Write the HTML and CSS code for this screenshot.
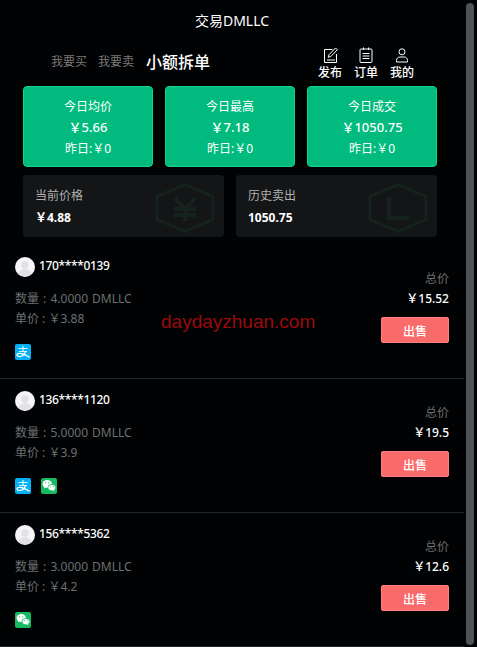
FILE: index.html
```html
<!DOCTYPE html>
<html lang="zh">
<head>
<meta charset="UTF-8">
<meta name="viewport" content="width=device-width, initial-scale=1.0">
<title>交易DMLLC</title>
<link rel="stylesheet" href="styles.css">
</head>
<body>
<svg class="sprites" width="0" height="0">
  <symbol id="alipay" viewBox="0 0 16 16">
    <rect width="16" height="16" rx="2" fill="#06b0f5"/>
    <path d="M8 2v5M3.500 4.500h9M4 7.500h8" stroke="#d5f1fe" stroke-width="1.200" fill="none"/>
    <path d="M10.500 7.500C9.500 10.500 7 12.500 4.500 12.500 3 12.500 2 11.900 2 10.900S3.200 9.300 4.800 9.300c2.500 0 6 1.500 9.700 3.900" stroke="#fff" stroke-width="1.200" fill="none"/>
  </symbol>
  <symbol id="wechat" viewBox="0 0 16 16">
    <rect width="16" height="16" rx="2" fill="#15bb62"/>
    <ellipse cx="6.200" cy="6" rx="4.700" ry="3.900" fill="#fff"/>
    <path d="M3.400 8.300 3 10.300l2.300-1.300z" fill="#fff"/>
    <ellipse cx="10.800" cy="9.600" rx="3.900" ry="3.200" stroke="#15bb62" stroke-width=".8" fill="#fff"/>
    <path d="M12.700 11.800l.5 1.500-1.900-1z" fill="#fff"/>
    <circle cx="4.600" cy="4.800" r=".6" fill="#15bb62"/>
    <circle cx="7.800" cy="4.800" r=".6" fill="#15bb62"/>
    <circle cx="9.500" cy="8.800" r=".5" fill="#15bb62"/>
    <circle cx="12.100" cy="8.800" r=".5" fill="#15bb62"/>
  </symbol>
  <symbol id="avatar" viewBox="0 0 20 20">
    <circle cx="10" cy="10" r="10" fill="#f6f6f8"/>
    <circle cx="10" cy="8" r="3.700" fill="#e2e2e6"/>
    <path d="M3.500 16.500c1-3.200 3.500-4.500 6.500-4.500s5.500 1.300 6.500 4.500A9.500 9.500 0 0 1 10 19.500a9.500 9.500 0 0 1-6.500-3z" fill="#e2e2e6"/>
  </symbol>
</svg>

<div class="page">
  <div class="title">交易DMLLC</div>

  <div class="nav">
    <div class="tabs">
      <span class="tab">我要买</span>
      <span class="tab">我要卖</span>
      <span class="tab active">小额拆单</span>
    </div>
    <div class="links">
      <div class="link">
        <svg width="16" height="16" viewBox="0 0 16 16" fill="none" stroke="#fff" stroke-width="1">
          <path d="M10.500 2.500H2.500v13h12V7"/>
          <path d="M13.500 1l1.800 1.800-6.500 6.700-2.600.8.800-2.600zM5 13h8"/>
        </svg>
        <span>发布</span>
      </div>
      <div class="link">
        <svg width="16" height="16" viewBox="0 0 16 16" fill="none" stroke="#fff" stroke-width="1">
          <rect x="2" y="2" width="12" height="13.500" rx="1"/>
          <path d="M5.500.5v2.500M10.500.5v2.500M4.500 6.500h7M4.500 9h7M4.500 11.500h7"/>
        </svg>
        <span>订单</span>
      </div>
      <div class="link">
        <svg width="16" height="16" viewBox="0 0 16 16" fill="none" stroke="#fff" stroke-width="1">
          <circle cx="8" cy="4.800" r="3"/>
          <path d="M2.500 15v-1.500c0-2 1.500-3.500 3.500-3.500h4c2 0 3.500 1.500 3.500 3.500V15z"/>
        </svg>
        <span>我的</span>
      </div>
    </div>
  </div>

  <div class="today">
    <div class="today-card">
      <div class="today-name">今日均价</div>
      <div class="today-value">￥5.66</div>
      <div class="today-prev">昨日:￥0</div>
    </div>
    <div class="today-card">
      <div class="today-name">今日最高</div>
      <div class="today-value">￥7.18</div>
      <div class="today-prev">昨日:￥0</div>
    </div>
    <div class="today-card">
      <div class="today-name">今日成交</div>
      <div class="today-value">￥1050.75</div>
      <div class="today-prev">昨日:￥0</div>
    </div>
  </div>

  <div class="summary">
    <div class="summary-card">
      <div class="summary-name">当前价格</div>
      <div class="summary-value">￥4.88</div>
      <svg class="hex" width="60" height="50" viewBox="0 0 60 50" fill="none" stroke="#15221e" stroke-width="3">
        <path d="M30 1.500 58 13.500v23L30 48.500 2 36.500v-23z"/>
        <path d="M20 15l10 11 10-11M30 26v12M19 26h22M19 32h22" stroke-width="4"/>
      </svg>
    </div>
    <div class="summary-card">
      <div class="summary-name">历史卖出</div>
      <div class="summary-value">1050.75</div>
      <svg class="hex" width="60" height="50" viewBox="0 0 60 50" fill="none" stroke="#15221e" stroke-width="3">
        <path d="M30 1.500 58 13.500v23L30 48.500 2 36.500v-23z"/>
        <path d="M21 14v21h20" stroke-width="4"/>
      </svg>
    </div>
  </div>

  <div class="order">
    <div class="order-info">
      <div class="user"><svg class="avatar"><use href="#avatar"/></svg><span>170****0139</span></div>
      <div class="line qty">数量 : 4.0000 DMLLC</div>
      <div class="line">单价 : ￥3.88</div>
      <div class="pay"><svg class="pay-icon"><use href="#alipay"/></svg></div>
    </div>
    <div class="order-side">
      <div class="total-name">总价</div>
      <div class="total">￥15.52</div>
      <button class="sell">出售</button>
    </div>
  </div>

  <div class="order">
    <div class="order-info">
      <div class="user"><svg class="avatar"><use href="#avatar"/></svg><span>136****1120</span></div>
      <div class="line qty">数量 : 5.0000 DMLLC</div>
      <div class="line">单价 : ￥3.9</div>
      <div class="pay"><svg class="pay-icon"><use href="#alipay"/></svg><svg class="pay-icon"><use href="#wechat"/></svg></div>
    </div>
    <div class="order-side">
      <div class="total-name">总价</div>
      <div class="total">￥19.5</div>
      <button class="sell">出售</button>
    </div>
  </div>

  <div class="order">
    <div class="order-info">
      <div class="user"><svg class="avatar"><use href="#avatar"/></svg><span>156****5362</span></div>
      <div class="line qty">数量 : 3.0000 DMLLC</div>
      <div class="line">单价 : ￥4.2</div>
      <div class="pay"><svg class="pay-icon"><use href="#wechat"/></svg></div>
    </div>
    <div class="order-side">
      <div class="total-name">总价</div>
      <div class="total">￥12.6</div>
      <button class="sell">出售</button>
    </div>
  </div>

  <div class="watermark">daydayzhuan.com</div>
</div>

<div class="scrollbar"></div>
</body>
</html>
```

FILE: styles.css
```css
* {
  box-sizing: border-box;
}
body {
  margin: 0;
  height: 647px;
  overflow: hidden;
  background: #000204;
  color: #fff;
  font-family: "Noto Sans", "Noto Sans CJK SC", sans-serif;
  font-size: 12px;
}
.sprites {
  position: absolute;
}
.page {
  position: relative;
  width: 464px;
}
.title {
  height: 43px;
  padding-top: 11px;
  text-align: center;
  font-size: 14px;
  line-height: 20px;
}
.nav {
  display: flex;
  align-items: flex-start;
  height: 43px;
  padding-left: 51px;
}
.tabs {
  display: flex;
  align-items: center;
  gap: 11px;
  height: 36px;
}
.tab {
  color: #7d7a76;
  font-size: 12px;
}
.tab.active {
  margin-left: 1px;
  color: #fff;
  font-size: 16px;
  font-weight: 500;
}
.links {
  display: flex;
  gap: 12px;
  margin-left: 108px;
}
.link {
  display: flex;
  flex-direction: column;
  align-items: center;
  width: 24px;
  font-weight: 500;
  line-height: 18px;
  padding-top: 4px;
}
.link svg {
  display: block;
  margin-bottom: 1px;
}
.today {
  display: flex;
  gap: 12px;
  padding: 0 23px;
}
.today-card {
  width: 130px;
  height: 81px;
  padding-top: 10px;
  background: #00bb7d;
  border: 1px solid #0fd68c;
  border-radius: 4px;
  text-align: center;
}
.today-name {
  font-size: 12px;
  line-height: 20px;
}
.today-value {
  font-size: 13px;
  line-height: 21px;
  font-weight: 500;
}
.today-prev {
  font-size: 12px;
  line-height: 21px;
}
.summary {
  display: flex;
  gap: 12px;
  padding: 8px 23px;
}
.summary-card {
  position: relative;
  width: 201px;
  height: 62px;
  padding: 11px 12px;
  background: #131516;
  border-radius: 4px;
}
.summary-name {
  color: #b0b0b0;
  font-size: 12px;
  line-height: 20px;
}
.summary-value {
  font-weight: 700;
  line-height: 24px;
}
.hex {
  position: absolute;
  right: 9px;
  top: 8px;
}
.order {
  display: flex;
  justify-content: space-between;
  height: 134px;
  padding: 0 15px;
  border-bottom: 1px solid #25272a;
}
.order-info {
  padding-top: 12px;
}
.user {
  display: flex;
  align-items: flex-start;
  gap: 4px;
  height: 20px;
  font-weight: 500;
  line-height: 18px;
  letter-spacing: -0.35px;
}
.avatar {
  width: 20px;
  height: 20px;
}
.line {
  color: #6f6f6f;
  line-height: 20px;
}
.line.qty {
  word-spacing: 1px;
}
.user + .line {
  margin-top: 12px;
}
.pay {
  display: flex;
  gap: 10px;
  margin-top: 15px;
}
.pay-icon {
  display: block;
  width: 16px;
  height: 16px;
}
.order-side {
  display: flex;
  flex-direction: column;
  align-items: flex-end;
  padding-top: 24px;
}
.total-name {
  color: #6f6f6f;
  line-height: 20px;
}
.total {
  font-weight: 500;
  line-height: 20px;
}
.sell {
  width: 68px;
  height: 26px;
  margin-top: 8px;
  padding: 1px 0 0;
  border: 1px solid #ff8080;
  border-radius: 2px;
  background: #f96a6a;
  color: #fff;
  font-family: inherit;
  font-size: 12px;
  font-weight: 500;
}
.watermark {
  position: absolute;
  left: 161px;
  top: 311px;
  color: #9b0a0a;
  font-family: "Liberation Sans", sans-serif;
  font-size: 19px;
  line-height: 21px;
}
.scrollbar {
  position: absolute;
  left: 466px;
  top: 3px;
  width: 8px;
  height: 642px;
  background: #4f5259;
  border-radius: 4px;
}
```
